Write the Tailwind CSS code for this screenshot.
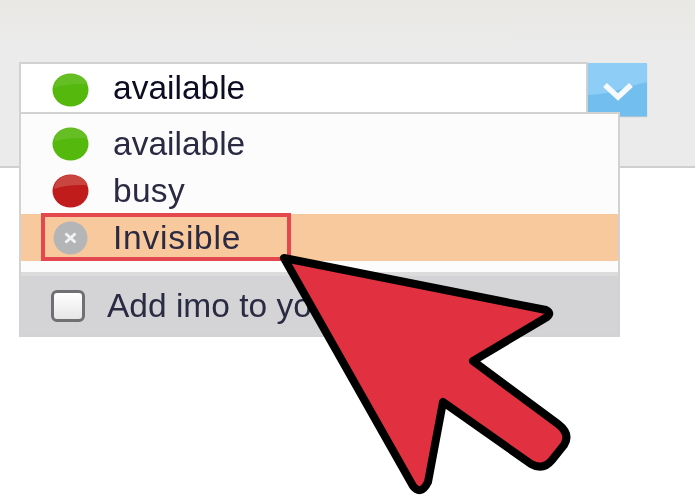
<!DOCTYPE html>
<html lang="en">
<head>
    <meta charset="UTF-8">
    <meta name="viewport" content="width=device-width, initial-scale=1.0">
    <title>imo status menu</title>
    <script src="https://cdn.jsdelivr.net/npm/@tailwindcss/browser@4"></script>
</head>
<body class="bg-white w-[695px] h-[495px] overflow-hidden relative font-['Liberation_Sans',Arial,sans-serif]">
<!-- top bar with the select box -->
<header class="h-[168px] bg-gradient-to-b from-[#e9e8e4] via-[#ebebeb] via-30% to-[#ebebeb] border-b-2 border-[#cfcfcf] pt-[62px] pl-[19px]">
    <div class="flex items-start blur-[0.6px]">
        <div class="w-[569px] h-[52px] bg-white border-2 border-[#d2d2d2] flex items-center pl-[31px] gap-[24px]">
            <svg class="mt-[3px]" width="37" height="34" viewBox="0 0 37 34">
                <ellipse cx="18.5" cy="17" rx="18" ry="16.5" fill="#55b80c"/>
                <path d="M2 15C3 6 10 1 18.5 1S34 5 35.5 11C25 11 12 11 2 15Z" fill="#64be24"/>
            </svg>
            <span class="text-[33.5px] leading-none text-[#0c0c22]">available</span>
        </div>
        <svg class="mt-[1px] shadow-[0_1px_1px_#a9c4d6]" width="59" height="53" viewBox="0 0 59 53">
            <rect width="59" height="53" fill="#72bfef"/>
            <path d="M0 0H59V19C40 23 20 32 0 32Z" fill="#8ecef6"/>
            <path d="M17 22L30 34L43 22" fill="none" stroke="#f6fafd" stroke-width="5.5"/>
        </svg>
    </div>
</header>

<!-- open dropdown -->
<div class="absolute left-[19px] top-[112px] w-[601px] h-[225px] border-2 border-[#d2d2d2] bg-[#fcfcfc] flex flex-col blur-[0.6px]">
    <ul class="flex-1 pt-[6px] text-[33.5px] leading-none text-[#2a2a42]">
        <li class="h-[47px] flex items-center pl-[31px] gap-[24px]">
            <svg width="37" height="34" viewBox="0 0 37 34">
                <ellipse cx="18.5" cy="17" rx="18" ry="16.5" fill="#55b80c"/>
                <path d="M2 15C3 6 10 1 18.5 1S34 5 35.5 11C25 11 12 11 2 15Z" fill="#64be24"/>
            </svg>
            <span>available</span>
        </li>
        <li class="h-[47px] flex items-center pl-[31px] gap-[24px]">
            <svg width="37" height="34" viewBox="0 0 37 34">
                <ellipse cx="18.5" cy="17" rx="18" ry="16.5" fill="#c01c1c"/>
                <path d="M2 15C3 6 10 1 18.5 1S34 5 35.5 11C25 11 12 11 2 15Z" fill="#c84540"/>
            </svg>
            <span class="tracking-[0.3px]">busy</span>
        </li>
        <li class="h-[47px] flex items-center pl-[32px] gap-[25px] bg-[#f8c99c]">
            <svg width="35" height="34" viewBox="0 0 35 34">
                <ellipse cx="17.5" cy="17" rx="17" ry="16.5" fill="#b4b5b6"/>
                <path d="M12.5 12.5L22.5 21.5M22.5 12.5L12.5 21.5" stroke="#f2f2f2" stroke-width="3"/>
            </svg>
            <span class="tracking-[0.8px]">Invisible</span>
        </li>
    </ul>
    <footer class="h-[63px] border-t-4 border-[#dcdcdd] bg-[#d4d4d6] flex items-center pl-[30px] gap-[22px] text-[33.5px] leading-none text-[#2a2a42]">
        <span class="w-[34px] h-[32px] rounded-[6px] border-[3px] border-[#707074] bg-gradient-to-b from-white to-[#e6e6e6]"></span>
        <span class="whitespace-nowrap">Add imo to your</span>
    </footer>
</div>

<!-- red highlight round the Invisible row -->
<div class="absolute left-[41px] top-[213px] w-[250px] h-[48px] border-[4px] border-[#e5474f]"></div>

<!-- big red pointer -->
<svg class="absolute left-0 top-0" width="695" height="495" viewBox="0 0 695 495">
    <path d="M284 258L546 310Q552 313 547 317L473 361L558 424Q571 434 564 445L552 460Q543 471 531 464L443 402L428 482Q421 496 413 486Z" fill="#e13140" stroke="#000" stroke-width="8" stroke-linejoin="round"/>
</svg>
</body>
</html>
